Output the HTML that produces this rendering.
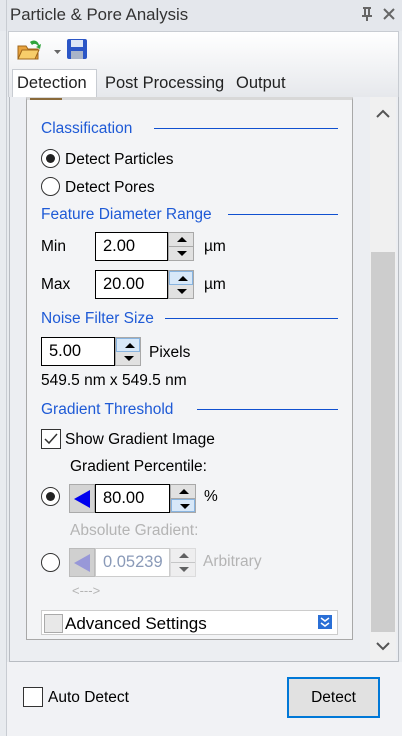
<!DOCTYPE html>
<html><head><meta charset="utf-8"><style>
*{margin:0;padding:0;box-sizing:border-box}
body{width:402px;height:736px;overflow:hidden;background:#e8ebef;font-family:"Liberation Sans",sans-serif;position:relative;color:#000}
.a{position:absolute;white-space:nowrap}
.t{font-size:15.5px;line-height:18px;margin-top:1px}
.h{color:#1e5ad6;font-size:15.5px;line-height:18px;margin-top:1px}
.ln{position:absolute;height:1px;background:#1050d0}
.rad{position:absolute;width:19px;height:19px;border:1px solid #333;border-radius:50%;background:#fff}
.rad.on::after{content:"";position:absolute;left:4px;top:4px;width:9px;height:9px;border-radius:50%;background:#222}
.box{position:absolute;background:#fff;border:1px solid #000;font-size:16.5px;padding-left:7px;line-height:26px}
.sp{position:absolute;width:26px;border:1px solid #a8a8a8;background:#e1e1e1}
.sp div{height:50%;position:relative;border-bottom:1px solid #a8a8a8}
.sp div:last-child{border-bottom:none}
.up::after{content:"";position:absolute;left:8px;top:4px;border:5px solid transparent;border-bottom:5px solid #000;border-top:0}
.dn::after{content:"";position:absolute;left:8px;top:4px;border:5px solid transparent;border-top:5px solid #000;border-bottom:0}
</style></head><body>
<div class="a" style="left:0;top:0;width:402px;height:31px;background:#e4e7ec"></div>
<div class="a" style="left:6px;top:0;width:1px;height:736px;background:#c8ccd2"></div>
<div class="a" style="left:10px;top:5px;font-size:16.8px;color:#333">Particle &amp; Pore Analysis</div>
<svg class="a" style="left:360px;top:6px" width="40" height="16"><path d="M3 2h8M5 2v8M9 2v8M2 10h10M7 10v5" stroke="#666" stroke-width="2" fill="none"/><path d="M24 3l10 10M34 3l-10 10" stroke="#666" stroke-width="2"/></svg>
<div class="a" style="left:8px;top:31px;width:391px;height:66px;background:linear-gradient(#fff,#e6e8ec);border:1px solid #c8ccd2;border-bottom:none"></div>
<svg class="a" style="left:16px;top:36px" width="80" height="26"><path d="M2 10h8l2 3h10v10H2z" fill="#e8a23c" stroke="#a0661a"/><path d="M2 23l4-9h17l-4 9z" fill="#f7cd6a" stroke="#a0661a"/><path d="M14 6c4-3 8-1 9 3l2-1-1 5-4-2 2-1c-1-2-4-3-6-1z" fill="#2fa43a"/><path d="M38 14h7l-3.5 4z" fill="#666"/><rect x="51" y="3" width="20" height="20" rx="2" fill="#2b56c6"/><rect x="55" y="4" width="12" height="7" fill="#dde6f5"/><rect x="55" y="15" width="12" height="8" fill="#a9b4c8"/></svg>
<div class="a" style="left:12px;top:69px;width:85px;height:30px;background:#fff;border:1px solid #c8ccd2;border-bottom:none"></div>
<div class="a" style="left:17px;top:74px;font-size:16.5px;color:#222">Detection</div>
<div class="a" style="left:105px;top:74px;font-size:16.5px;color:#222">Post Processing</div>
<div class="a" style="left:236px;top:74px;font-size:16.5px;color:#222">Output</div>
<div class="a" style="left:9px;top:97px;width:390px;height:565px;background:#eceef2;border:1px solid #b8bcc2;border-top:none"></div>
<div class="a" style="left:26px;top:97px;width:327px;height:543px;background:#f3f4f6;border:1px solid #a8a8a8;border-top:3px solid #d8d8d8"></div>
<div class="a" style="left:30px;top:98px;width:32px;height:2px;background:#8a6a3a"></div>
<div class="a" style="left:370px;top:97px;width:26px;height:563px;background:#f0f0f0"></div>
<div class="a" style="left:371px;top:252px;width:24px;height:380px;background:#cdcdcd"></div>
<svg class="a" style="left:375px;top:108px" width="16" height="12"><path d="M2 9l6-6 6 6" stroke="#555" stroke-width="2" fill="none"/></svg>
<svg class="a" style="left:375px;top:640px" width="16" height="12"><path d="M2 3l6 6 6-6" stroke="#555" stroke-width="2" fill="none"/></svg>

<div class="a h" style="left:41px;top:119px">Classification</div><div class="ln" style="left:154px;top:128px;width:184px"></div>
<div class="rad on" style="left:41px;top:149px"></div><div class="a t" style="left:65px;top:150px">Detect Particles</div>
<div class="rad" style="left:41px;top:177px"></div><div class="a t" style="left:65px;top:178px">Detect Pores</div>
<div class="a h" style="left:41px;top:205px">Feature Diameter Range</div><div class="ln" style="left:228px;top:214px;width:110px"></div>
<div class="a t" style="left:41px;top:237px">Min</div>
<div class="box" style="left:95px;top:232px;width:73px;height:29px">2.00</div>
<div class="sp" style="left:168px;top:232px;height:29px"><div class="up"></div><div class="dn"></div></div>
<div class="a t" style="left:204px;top:237px">µm</div>
<div class="a t" style="left:41px;top:275px">Max</div>
<div class="box" style="left:95px;top:270px;width:73px;height:29px">20.00</div>
<div class="sp" style="left:168px;top:270px;height:29px"><div class="up" style="background:#d8e8f8;border:1px solid #88b4e0"></div><div class="dn"></div></div>
<div class="a t" style="left:204px;top:275px">µm</div>
<div class="a h" style="left:41px;top:309px">Noise Filter Size</div><div class="ln" style="left:165px;top:318px;width:173px"></div>
<div class="box" style="left:41px;top:337px;width:74px;height:29px">5.00</div>
<div class="sp" style="left:115px;top:337px;height:29px"><div class="up" style="background:#d8e8f8;border:1px solid #88b4e0"></div><div class="dn"></div></div>
<div class="a t" style="left:149px;top:343px">Pixels</div>
<div class="a t" style="left:41px;top:371px">549.5 nm x 549.5 nm</div>
<div class="a h" style="left:41px;top:400px">Gradient Threshold</div><div class="ln" style="left:197px;top:409px;width:141px"></div>
<div class="a" style="left:41px;top:429px;width:20px;height:20px;border:1px solid #333;background:#fff"></div>
<svg class="a" style="left:43px;top:431px" width="16" height="16"><path d="M2 8l4 4 8-9" stroke="#333" stroke-width="1.5" fill="none"/></svg>
<div class="a t" style="left:65px;top:430px">Show Gradient Image</div>
<div class="a t" style="left:70px;top:457px">Gradient Percentile:</div>
<div class="rad on" style="left:41px;top:487px"></div>
<div class="a" style="left:69px;top:484px;width:26px;height:29px;background:#d4d4d4;border:1px solid #aaa"></div>
<svg class="a" style="left:72px;top:488px" width="20" height="22"><path d="M18 2v18L2 11z" fill="#0000ee"/></svg>
<div class="box" style="left:95px;top:484px;width:75px;height:29px">80.00</div>
<div class="sp" style="left:170px;top:484px;height:29px"><div class="up"></div><div class="dn" style="background:#d8e8f8;border:1px solid #88b4e0"></div></div>
<div class="a t" style="left:204px;top:487px">%</div>
<div class="a t" style="left:70px;top:521px;color:#b4b4b4">Absolute Gradient:</div>
<div class="rad" style="left:41px;top:553px"></div>
<div class="a" style="left:69px;top:548px;width:26px;height:29px;background:#d0d0d0;border:1px solid #bbb"></div>
<svg class="a" style="left:72px;top:552px" width="20" height="22"><path d="M18 2v18L2 11z" fill="#9898d8"/></svg>
<div class="box" style="left:95px;top:548px;width:75px;height:29px;border-color:#ccc;color:#8a9ab8">0.05239</div>
<div class="sp" style="left:170px;top:548px;height:29px;border-color:#ccc;background:#ebebeb;opacity:.6"><div class="up"></div><div class="dn"></div></div>
<div class="a t" style="left:203px;top:552px;color:#b4b4b4">Arbitrary</div>
<div class="a" style="left:72px;top:583px;font-size:13px;color:#b4b4b4">&lt;---&gt;</div>
<div class="a" style="left:41px;top:610px;width:297px;height:25px;background:#fff;border:1px solid #ccc"></div>
<div class="a" style="left:44px;top:614px;width:19px;height:19px;border:1px solid #aaa;background:#e8e8e8"></div>
<div class="a" style="left:65px;top:613px;font-size:17px;line-height:22px">Advanced Settings</div>
<div class="a" style="left:318px;top:615px;width:14px;height:14px;background:#2a6fd6"></div>
<svg class="a" style="left:318px;top:615px" width="14" height="14"><path d="M3 3l4 3 4-3M3 8l4 3 4-3" stroke="#fff" stroke-width="1.5" fill="none"/></svg>

<div class="a" style="left:7px;top:662px;width:395px;height:74px;background:#f1f2f5"></div>
<div class="a" style="left:23px;top:687px;width:20px;height:20px;border:1px solid #333;background:#fff"></div>
<div class="a t" style="left:48px;top:688px">Auto Detect</div>
<div class="a" style="left:287px;top:677px;width:93px;height:41px;background:#e1e1e1;border:2px solid #0078d7;text-align:center;line-height:37px;font-size:15.5px">Detect</div>
</body></html>
